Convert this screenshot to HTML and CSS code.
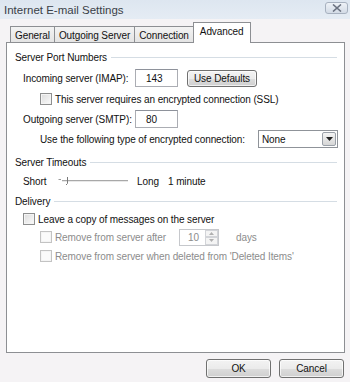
FILE: index.html
```html
<!DOCTYPE html>
<html>
<head>
<meta charset="utf-8">
<link rel="stylesheet" href="styles.css">
</head>
<body>
<div class="window">
  <div class="titlebar">
    <span class="title">Internet E-mail Settings</span>
    <span class="close"><svg width="12" height="8" viewBox="0 0 12 8"><path d="M2 0.5 L10 7.5 M10 0.5 L2 7.5" stroke="#6b7280" stroke-width="1.6" fill="none"/></svg></span>
  </div>
  <div class="tabs">
    <span class="tab">General</span>
    <span class="tab">Outgoing Server</span>
    <span class="tab">Connection</span>
    <span class="tab active">Advanced</span>
  </div>
  <div class="panel">
    <div class="group r-g1"><span>Server Port Numbers</span><i class="rule"></i></div>
    <div class="row r-in indent">
      <span class="lbl">Incoming server (IMAP):</span>
      <span class="input">143</span>
      <span class="btn defaults">Use Defaults</span>
    </div>
    <div class="row r-ssl indent2">
      <span class="cb"></span><span>This server requires an encrypted connection (SSL)</span>
    </div>
    <div class="row r-out indent">
      <span class="lbl">Outgoing server (SMTP):</span>
      <span class="input">80</span>
    </div>
    <div class="row r-enc indent2">
      <span class="lbl2">Use the following type of encrypted connection:</span>
      <span class="select"><span class="sel-text">None</span><span class="sel-btn"><svg width="7" height="4" viewBox="0 0 7 4"><path d="M0 0 H7 L3.5 4 Z" fill="#222"/></svg></span></span>
    </div>
    <div class="group r-g2"><span>Server Timeouts</span><i class="rule"></i></div>
    <div class="row r-slider indent">
      <span class="short">Short</span>
      <span class="slider"><svg width="70" height="10" viewBox="0 0 70 10"><path d="M0.5 3.5 H3" stroke="#9a9a9a"/><path d="M4 4.5 H70" stroke="#a8a8a8"/><path d="M4 5.5 H70" stroke="#e8e8e8"/><path d="M9.5 1 V7.5 L8 9" stroke="#7a7a7a" fill="none"/></svg></span>
      <span class="long">Long</span>
      <span>1 minute</span>
    </div>
    <div class="group r-g3"><span>Delivery</span><i class="rule"></i></div>
    <div class="row r-leave indent-cb">
      <span class="cb"></span><span>Leave a copy of messages on the server</span>
    </div>
    <div class="row r-after indent2 disabled">
      <span class="cb dis"></span><span class="lbl3">Remove from server after</span>
      <span class="spin"><span class="spin-text">10</span><span class="spin-btns"><span class="sb"><svg width="5" height="3" viewBox="0 0 5 3"><path d="M0 3 H5 L2.5 0 Z" fill="#b0b0b0"/></svg></span><span class="sb"><svg width="5" height="3" viewBox="0 0 5 3"><path d="M0 0 H5 L2.5 3 Z" fill="#b0b0b0"/></svg></span></span></span>
      <span class="days">days</span>
    </div>
    <div class="row r-when indent2 disabled">
      <span class="cb dis"></span><span>Remove from server when deleted from 'Deleted Items'</span>
    </div>
  </div>
  <div class="footer">
    <span class="btn ok">OK</span>
    <span class="btn cancel">Cancel</span>
  </div>
</div>
</body>
</html>
```

FILE: styles.css
```css
* { box-sizing: border-box; }
html, body { margin: 0; padding: 0; }
body {
  width: 350px;
  height: 382px;
  overflow: hidden;
  background: #f5f3f5;
  font-family: "Liberation Sans", Arial, sans-serif;
  font-size: 10px;
  letter-spacing: -0.1px;
  color: #111;
}
.window { width: 350px; height: 382px; }
.titlebar {
  height: 19px;
  display: flex;
  align-items: center;
  justify-content: space-between;
  padding: 0 2px 0 4px;
  background: linear-gradient(#dde6f0, #e5ecf4);
}
.title { font-size: 11.5px; color: #3a3f47; letter-spacing: 0; }
.close {
  width: 23px;
  height: 12px;
  margin-top: -3px;
  border: 1px solid #a7b1bf;
  border-radius: 3px;
  background: linear-gradient(#eef2f7, #d3dbe6);
  display: flex;
  align-items: center;
  justify-content: center;
}
.tabs {
  height: 23px;
  display: flex;
  align-items: flex-end;
  padding-left: 10px;
  white-space: nowrap;
}
.tab {
  height: 16px;
  padding: 1px 4px 0;
  border: 1px solid #8d8f93;
  border-bottom: none;
  margin-right: -1px;
  background: linear-gradient(#f3f3f3, #e4e4e4);
  display: flex;
  align-items: center;
  font-size: 10px;
}
.tab.active {
  height: 21px;
  margin-bottom: -1px;
  background: #fff;
  position: relative;
  z-index: 1;
  padding: 0 6px 3px;
}
.panel {
  margin-left: 6px;
  width: 339px;
  height: 311px;
  background: #fff;
  border: 1px solid #8d8f93;
  padding: 0 7px 0 8px;
  display: flex;
  flex-direction: column;
  white-space: nowrap;
}
.row { display: flex; align-items: center; }
.row > * { flex-shrink: 0; }
.group { display: flex; align-items: center; height: 14px; }
.group .rule { flex: 1; height: 1px; background: #d5dde4; margin-left: 4px; }
.indent { padding-left: 8px; }
.indent2 { padding-left: 25px; }
.indent-cb { padding-left: 8px; }

.r-g1 { margin-top: 7px; }
.r-in { height: 18px; margin-top: 5px; }
.r-ssl { height: 14px; margin-top: 5px; }
.r-out { height: 18px; margin-top: 4px; }
.r-enc { height: 18px; margin-top: 2px; }
.r-g2 { margin-top: 7px; }
.r-slider { height: 14px; margin-top: 5px; }
.r-g3 { margin-top: 6px; }
.r-leave { height: 14px; margin-top: 4px; }
.r-after { height: 18px; margin-top: 2px; }
.r-when { height: 14px; margin-top: 3px; }

.lbl { width: 112px; }
.input {
  width: 43px;
  height: 18px;
  border: 1px solid #abadb3;
  border-top-color: #8e929b;
  padding-left: 10px;
  display: flex;
  align-items: center;
}
.btn {
  height: 17px;
  border: 1px solid #707070;
  border-radius: 3px;
  background: linear-gradient(#f3f3f3 0%, #ebebeb 50%, #dddddd 51%, #cfcfcf 100%);
  display: flex;
  align-items: center;
  justify-content: center;
  box-shadow: inset 0 0 0 1px rgba(255,255,255,0.7);
}
.defaults { width: 70px; margin-left: 9px; }
.cb {
  width: 12px;
  height: 12px;
  border: 1px solid #8e8f8f;
  background: linear-gradient(135deg, #dcdcdc, #fbfbfb);
  box-shadow: inset 0 0 0 1px #f4f4f4;
  margin-right: 3px;
}
.cb.dis { border-color: #c3c3c3; background: #fafafa; }
.lbl2 { width: 218px; }
.select {
  width: 80px;
  height: 18px;
  border: 1px solid #8f9399;
  display: flex;
  align-items: center;
  justify-content: space-between;
  padding: 1px;
}
.sel-text { padding-left: 2px; }
.sel-btn {
  width: 14px;
  height: 14px;
  border: 1px solid #9aa0a8;
  border-radius: 2px;
  background: linear-gradient(#f4f4f4, #d6d6d6);
  display: flex;
  align-items: center;
  justify-content: center;
}
.short { width: 35px; }
.slider { width: 79px; display: flex; align-items: center; }
.long { width: 31px; }
.disabled { color: #8c8c8c; }
.lbl3 { width: 124px; }
.spin {
  width: 40px;
  height: 17px;
  border: 1px solid #c6c8cc;
  display: flex;
  align-items: center;
  justify-content: space-between;
  padding-left: 8px;
}
.spin-btns { width: 13px; height: 15px; display: flex; flex-direction: column; }
.sb {
  flex: 1;
  border: 1px solid #d2d4d8;
  background: #f4f4f4;
  display: flex;
  align-items: center;
  justify-content: center;
}
.days { margin-left: 17px; }
.footer {
  display: flex;
  justify-content: flex-end;
  gap: 8px;
  padding: 6px 6px 0 0;
}
.ok, .cancel { width: 65px; height: 19px; }
```
